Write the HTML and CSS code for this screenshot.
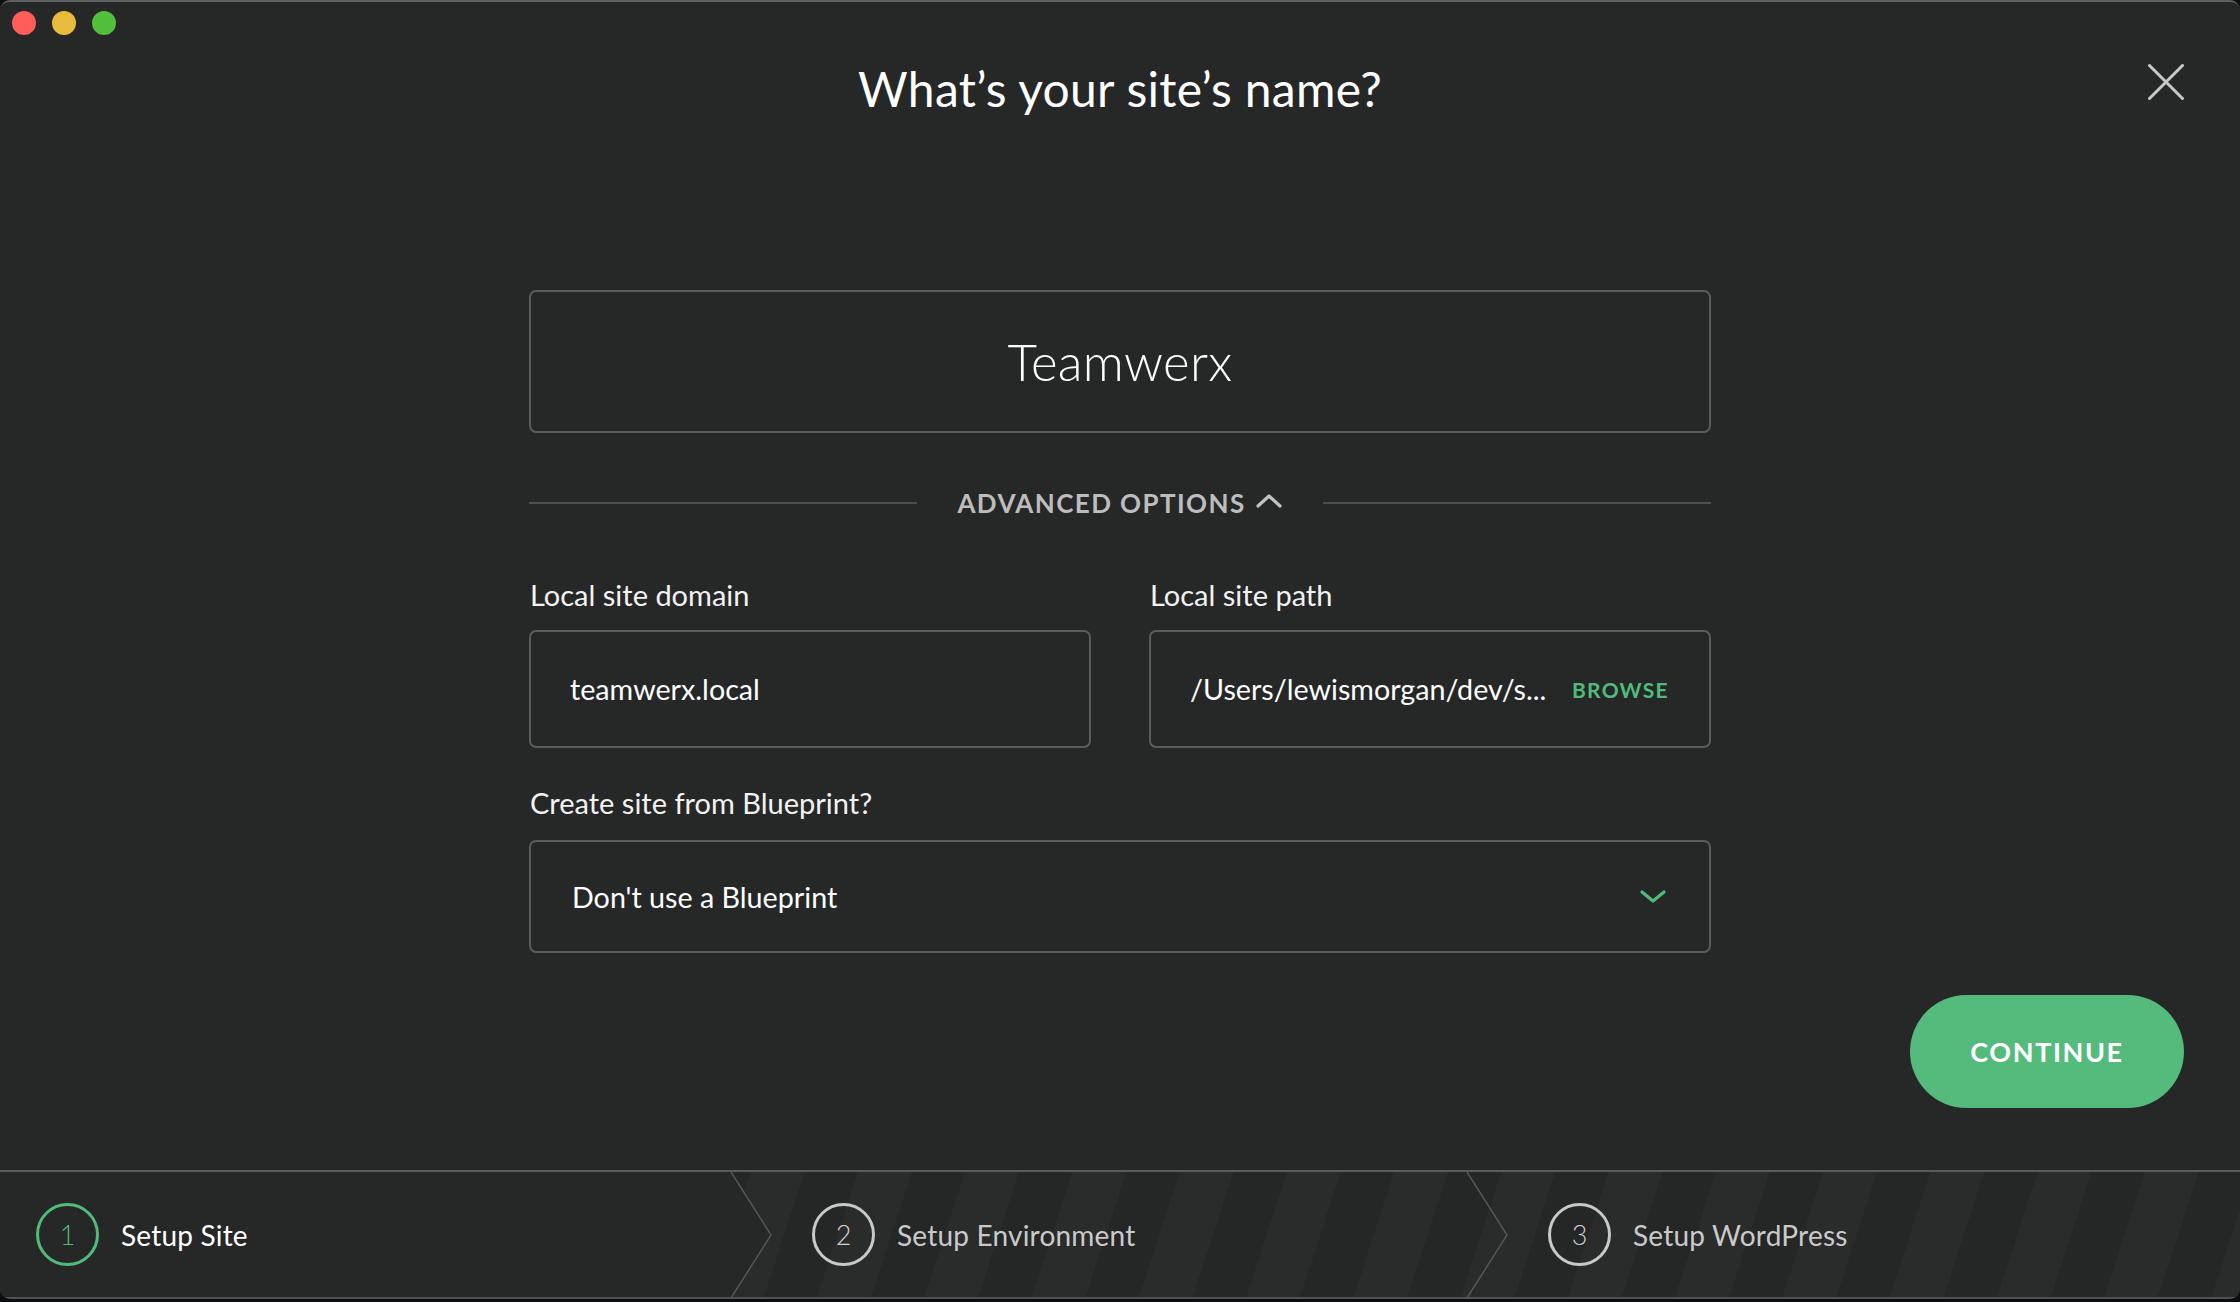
FILE: index.html
```html
<!DOCTYPE html>
<html lang="en">
<head>
<meta charset="utf-8">
<title>Create a new site</title>
<link rel="stylesheet" href="styles.css">
</head>
<body>
<div class="window">
  <div class="traffic">
    <span class="light red"></span>
    <span class="light yellow"></span>
    <span class="light green"></span>
  </div>
  <button class="close" aria-label="Close">
    <svg width="36" height="36" viewBox="0 0 36 36"><path d="M1.5 1.5 L34.5 34.5 M34.5 1.5 L1.5 34.5" stroke="#c9c9c9" stroke-width="3" stroke-linecap="round" fill="none"/></svg>
  </button>

  <main class="main">
    <h1 class="title">What’s your site’s name?</h1>

    <div class="form">
      <div class="name-box">Teamwerx</div>

      <div class="advanced">
        <span class="rule"></span>
        <span class="adv-label">ADVANCED OPTIONS
          <svg class="adv-chev" width="28" height="16" viewBox="0 0 28 16"><path d="M3 13 L14 3 L25 13" stroke="#c2c2c2" stroke-width="3.2" stroke-linecap="round" stroke-linejoin="round" fill="none"/></svg>
        </span>
        <span class="rule"></span>
      </div>

      <div class="two-col">
        <div class="field">
          <label class="label">Local site domain</label>
          <div class="input"><span class="value">teamwerx.local</span></div>
        </div>
        <div class="field">
          <label class="label">Local site path</label>
          <div class="input"><span class="value">/Users/lewismorgan/dev/s...</span><span class="browse">BROWSE</span></div>
        </div>
      </div>

      <div class="field field-blueprint">
        <label class="label">Create site from Blueprint?</label>
        <div class="input select"><span class="value">Don't use a Blueprint</span>
          <svg class="sel-chev" width="28" height="16" viewBox="0 0 28 16"><path d="M3 3 L14 12 L25 3" stroke="#51bb7b" stroke-width="3.2" stroke-linecap="round" stroke-linejoin="round" fill="none"/></svg>
        </div>
      </div>
    </div>

    <div class="actions">
      <button class="continue">CONTINUE</button>
    </div>
  </main>

  <footer class="steps">
    <div class="step step-active">
      <span class="num">1</span><span class="step-label">Setup Site</span>
    </div>
    <div class="step">
      <span class="num">2</span><span class="step-label">Setup Environment</span>
    </div>
    <div class="step">
      <span class="num">3</span><span class="step-label">Setup WordPress</span>
    </div>
    <svg class="chevrons" width="2240" height="126" viewBox="0 0 2240 126" preserveAspectRatio="none">
      <path d="M731 0 L771 63 L731 126" stroke="#555656" stroke-width="1.5" fill="none"/>
      <path d="M1467 0 L1507 63 L1467 126" stroke="#555656" stroke-width="1.5" fill="none"/>
    </svg>
  </footer>
</div>
</body>
</html>
```

FILE: styles.css
```css
* { box-sizing: border-box; }

html, body {
  margin: 0;
  padding: 0;
}

body {
  width: 2240px;
  height: 1302px;
  background: #0c0d0e;
  font-family: Lato, "Open Sans", "Liberation Sans", sans-serif;
  color: #ffffff;
  overflow: hidden;
}

.window {
  position: relative;
  height: 1299px;
  background: #262727;
  border-top: 2px solid #5e5f5f;
  border-radius: 10px 10px 10px 10px;
  display: flex;
  flex-direction: column;
  overflow: hidden;
}

.traffic {
  position: absolute;
  top: 9px;
  left: 12px;
  display: flex;
  gap: 16px;
}

.light {
  width: 24px;
  height: 24px;
  border-radius: 50%;
  display: block;
}
.red { background: #fd5c58; }
.yellow { background: #e8bd3c; }
.green { background: #52bf3c; }

.close {
  position: absolute;
  top: 62px;
  right: 56px;
  width: 36px;
  height: 36px;
  padding: 0;
  border: 0;
  background: none;
}
.close svg { display: block; }

.main {
  flex: 1;
  display: flex;
  flex-direction: column;
}

.title {
  margin: 59px 0 0;
  text-align: center;
  font-size: 48px;
  line-height: 56px;
  font-weight: 400;
  color: #ffffff;
  letter-spacing: 0.3px;
}

.form {
  width: 1182px;
  margin: 173px auto 0;
  display: flex;
  flex-direction: column;
}

.name-box {
  height: 143px;
  border: 2px solid #5b5c5c;
  border-radius: 7px;
  display: flex;
  align-items: center;
  justify-content: center;
  font-size: 51px;
  font-weight: 300;
  color: #ffffff;
  letter-spacing: 0.3px;
}

.advanced {
  margin-top: 50px;
  height: 40px;
  display: flex;
  align-items: center;
  gap: 40px;
}

.rule {
  flex: 1;
  height: 2px;
  background: #4d4e4e;
}

.adv-label {
  display: flex;
  align-items: center;
  gap: 9px;
  font-size: 26px;
  font-weight: 700;
  letter-spacing: 1.4px;
  color: #bdbdbd;
}

.adv-chev { display: block; margin-top: -4px; }

.two-col {
  margin-top: 55px;
  display: grid;
  grid-template-columns: 1fr 1fr;
  gap: 58px;
}

.field {
  display: flex;
  flex-direction: column;
}

.label {
  display: block;
  font-size: 29px;
  line-height: 34px;
  color: #f2f2f2;
  padding-left: 1px;
  margin-bottom: 18px;
}

.input {
  height: 118px;
  border: 2px solid #5b5c5c;
  border-radius: 7px;
  display: flex;
  align-items: center;
  justify-content: space-between;
  padding: 0 40px 0 39px;
}

.value {
  font-size: 28.7px;
  color: #ffffff;
  white-space: nowrap;
}

.browse {
  font-size: 21px;
  font-weight: 700;
  letter-spacing: 1.3px;
  color: #51bb7b;
}

.field-blueprint {
  margin-top: 38px;
}

.field-blueprint .label {
  margin-bottom: 20px;
}

.select {
  height: 113px;
  padding: 0 42px 0 41px;
}

.sel-chev { display: block; }

.actions {
  margin-top: 42px;
  display: flex;
  justify-content: flex-end;
  padding-right: 56px;
}

.continue {
  width: 274px;
  height: 113px;
  border: 0;
  border-radius: 57px;
  background: #55bb7d;
  color: #ffffff;
  font-family: Lato, "Open Sans", "Liberation Sans", sans-serif;
  font-size: 27px;
  font-weight: 700;
  letter-spacing: 1.6px;
}

.steps {
  position: relative;
  height: 129px;
  border-top: 2px solid #5a5b5b;
  border-bottom: 2px solid #505151;
  display: flex;
  background: repeating-linear-gradient(108deg, #2a2b2b 0px, #2a2b2b 51px, #252626 51px, #252626 102px);
}

.step {
  display: flex;
  align-items: center;
  gap: 22px;
  padding-left: 41px;
  color: #cacaca;
}

.step:nth-child(2) { width: 736px; }
.step:nth-child(3) { flex: 1; }

.step-active {
  width: 771px;
  padding-left: 36px;
  background: #262727;
  clip-path: polygon(0 0, 731px 0, 771px 50%, 731px 100%, 0 100%);
  color: #ffffff;
}

.num {
  width: 63px;
  height: 63px;
  border-radius: 50%;
  border: 3px solid #c9c9c9;
  display: flex;
  align-items: center;
  justify-content: center;
  font-size: 27px;
  font-weight: 300;
  color: #d0d0d0;
}

.step-active .num {
  border-color: #51bb7b;
  color: #51bb7b;
}

.step-label {
  font-size: 28px;
  letter-spacing: 0.2px;
}

.chevrons {
  position: absolute;
  left: 0;
  top: 0;
  pointer-events: none;
}
```
